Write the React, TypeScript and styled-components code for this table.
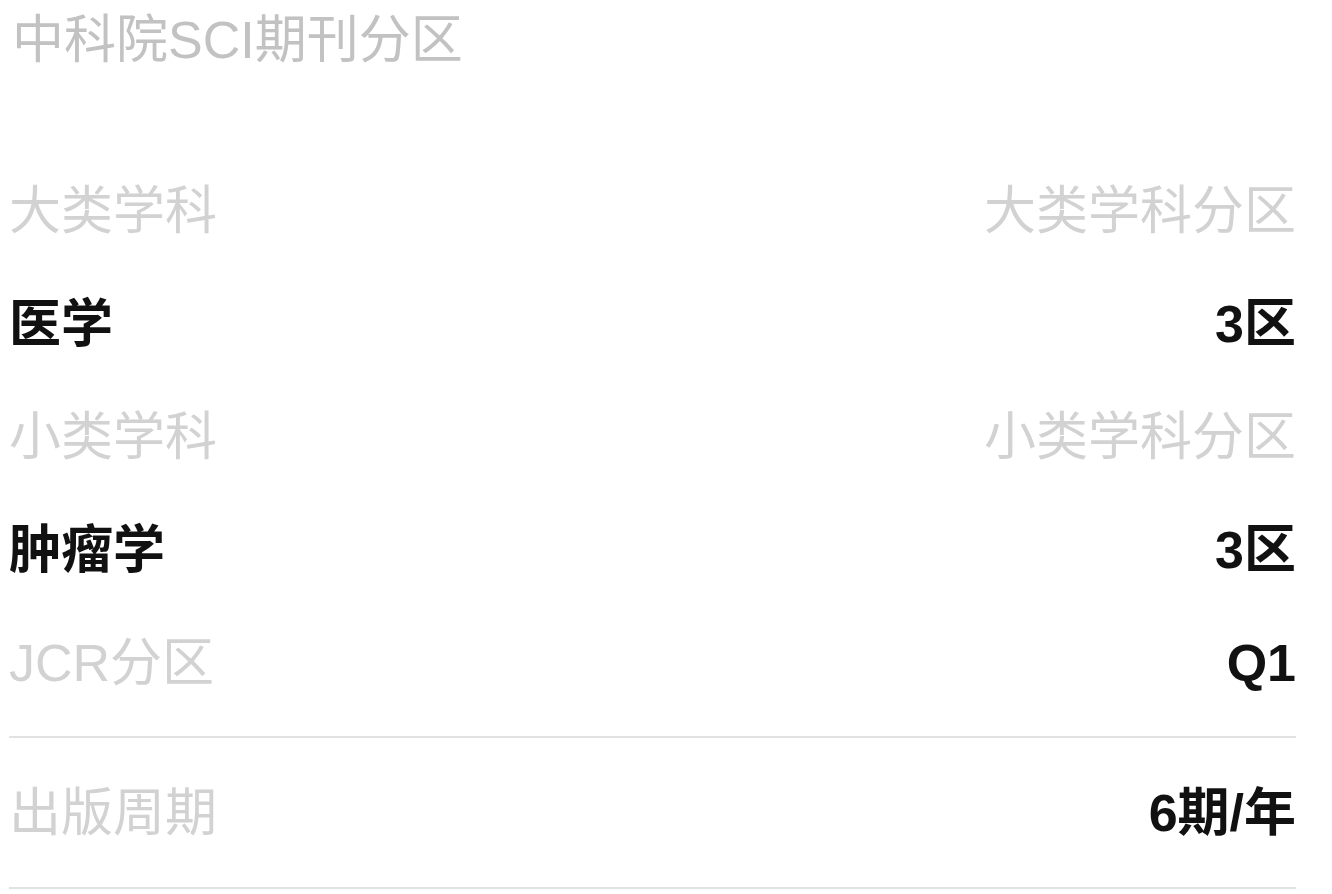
import styled, { createGlobalStyle } from "styled-components";

type Item = {
  label: string;
  value: string;
  strong?: boolean;
};

const rows: Item[][] = [
  [
    { label: "大类学科", value: "大类学科分区" },
    { label: "医学", value: "3区", strong: true },
  ],
  [
    { label: "小类学科", value: "小类学科分区" },
    { label: "肿瘤学", value: "3区", strong: true },
  ],
];

const App = () => {
  return (
    <>
      <GlobalStyle />
      <Page>
        <Title>中科院SCI期刊分区</Title>
        <Table>
          {rows.map((pair, i) =>
            pair.map((item) => (
              <Row key={`${i}-${item.label}`}>
                <Cell $strong={item.strong}>{item.label}</Cell>
                <Cell $strong={item.strong}>{item.value}</Cell>
              </Row>
            ))
          )}
          <Row>
            <Cell>JCR分区</Cell>
            <Cell $strong>Q1</Cell>
          </Row>
        </Table>
        <PeriodRow>
          <Cell>出版周期</Cell>
          <Cell $strong>6期/年</Cell>
        </PeriodRow>
      </Page>
    </>
  );
};

export default App;

const GlobalStyle = createGlobalStyle`
  body {
    margin: 0;
    background: #ffffff;
    font-family: "Liberation Sans", "Noto Sans CJK SC", sans-serif;
  }
`;

const Page = styled.div`
  width: 1287px;
  padding-left: 9px;
`;

const Title = styled.h1`
  margin: 0;
  height: 80px;
  line-height: 80px;
  font-size: 52px;
  font-weight: 400;
  color: #c2c2c2;
  padding-left: 3px;
`;

const Table = styled.div`
  margin-top: 74px;
  padding-bottom: 17px;
  border-bottom: 2px solid #e2e2e2;
`;

const Row = styled.div`
  height: 113px;
  display: flex;
  justify-content: space-between;
  align-items: center;
`;

const PeriodRow = styled(Row)`
  height: 149px;
  border-bottom: 2px solid #e2e2e2;
`;

const Cell = styled.span<{ $strong?: boolean }>`
  font-size: 52px;
  line-height: 60px;
  font-weight: ${(p) => (p.$strong ? 700 : 400)};
  color: ${(p) => (p.$strong ? "#111111" : "#d2d2d2")};
`;
